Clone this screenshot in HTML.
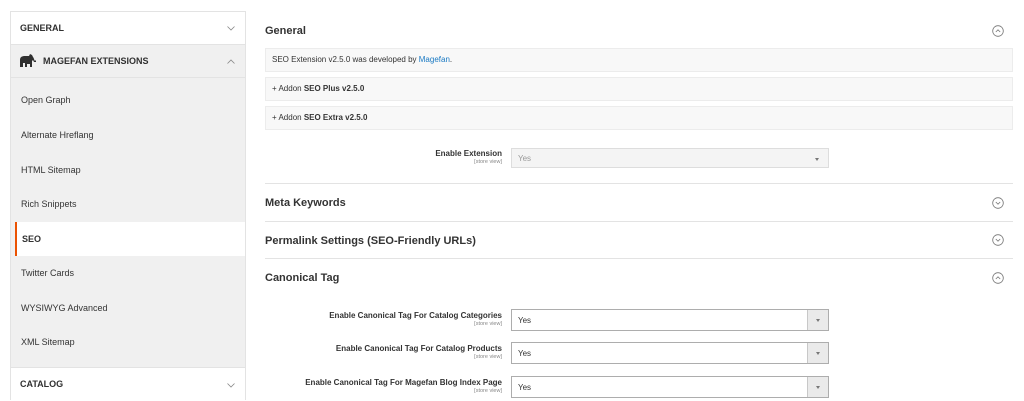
<!DOCTYPE html>
<html><head><meta charset="utf-8"><style>
*{margin:0;padding:0;box-sizing:border-box}
body{width:1024px;height:400px;background:#fff;font-family:"Liberation Sans",sans-serif;color:#303030;position:relative;overflow:hidden}
.a{position:absolute}
.side{left:10px;top:11px;width:236px;height:389px;border:1px solid #e3e3e3;background:#f0f0f0}
.hd{position:absolute;left:0;width:234px;height:33px;font-size:9px;font-weight:bold;color:#303030;padding-left:9px;line-height:33px}
.it{position:absolute;left:0;width:234px;height:34px;line-height:34px;font-size:9px;color:#333;padding-left:10px}
.chev{position:absolute;right:10px;top:0}
.sec{position:absolute;left:265px;font-size:11px;font-weight:bold;color:#333}
.line{position:absolute;left:265px;width:748px;height:1px;background:#e3e3e3}
.box{position:absolute;left:265px;width:748px;height:24px;background:#f8f8f8;border:1px solid #ececec;font-size:8px;line-height:22px;padding-left:6px;color:#333}
.lbl{position:absolute;right:calc(1024px - 502px);text-align:right;font-size:8px;font-weight:bold;color:#333;white-space:nowrap}
.lbl small{display:block;font-size:5.5px;font-weight:normal;color:#888;margin-top:1px}
.sel{position:absolute;left:511px;width:318px;height:22px;border:1px solid #adadad;background:#fff;font-size:8px;line-height:22px;padding-left:6px;color:#333}
.sel .btn{position:absolute;right:0;top:0;width:21px;height:20px;background:#eaeaea;border-left:1px solid #c8c8c8}
.sel .btn:after{content:"";position:absolute;left:8px;top:9px;border:2.5px solid transparent;border-top:3px solid #777}
.ci{position:absolute;left:992px}
</style></head><body>
<div class="a side">
 <div class="hd" style="top:0;background:#fff;border-bottom:1px solid #e3e3e3">GENERAL<svg class="chev" style="top:14px" width="8" height="5" viewBox="0 0 8 5"><path d="M.5 .5l3.5 3.5L7.5 .5" fill="none" stroke="#888" stroke-width=".8"/></svg></div>
 <div class="hd" style="top:33px;border-bottom:1px solid #e3e3e3;padding-left:32px">MAGEFAN EXTENSIONS
  <svg style="position:absolute;left:8px;top:9px" width="18" height="14" viewBox="0 0 18 14"><path d="M1 13V6C1 3 3 2 6 2H10L11 0 13 1 14 3C15 4 15 6 16 7L17 6 17 8 15 8 14 6 13 7V13H11V10H8V13H6V9H4V13Z" fill="#303030"/></svg>
  <svg class="chev" style="top:14px" width="8" height="5" viewBox="0 0 8 5"><path d="M.5 4.5L4 1l3.5 3.5" fill="none" stroke="#888" stroke-width=".8"/></svg></div>
 <div class="it" style="top:71px">Open Graph</div>
 <div class="it" style="top:106px">Alternate Hreflang</div>
 <div class="it" style="top:141px">HTML Sitemap</div>
 <div class="it" style="top:175px">Rich Snippets</div>
 <div class="it" style="top:210px;background:#fff;left:4px;width:230px;border-left:2px solid #eb5202;padding-left:5px;font-weight:bold">SEO</div>
 <div class="it" style="top:244px">Twitter Cards</div>
 <div class="it" style="top:279px">WYSIWYG Advanced</div>
 <div class="it" style="top:313px">XML Sitemap</div>
 <div class="hd" style="top:355px;background:#fff;border-top:1px solid #e3e3e3">CATALOG<svg class="chev" style="top:15px" width="8" height="5" viewBox="0 0 8 5"><path d="M.5 .5l3.5 3.5L7.5 .5" fill="none" stroke="#888" stroke-width=".8"/></svg></div>
</div>

<div class="sec" style="top:25px">General</div>
<div class="box" style="top:48px">SEO Extension v2.5.0 was developed by <span style="color:#1979c3">Magefan</span>.</div>
<div class="box" style="top:77px">+ Addon <b>SEO Plus v2.5.0</b></div>
<div class="box" style="top:106px">+ Addon <b>SEO Extra v2.5.0</b></div>
<div class="lbl" style="top:149px">Enable Extension<small>[store view]</small></div>
<div class="sel" style="top:148px;border-color:#ddd;background:#f4f4f4;color:#999;height:20px;line-height:20px">Yes<div class="btn" style="background:#f4f4f4;border-left:none;height:18px"></div></div>
<div class="line" style="top:183px"></div>
<div class="sec" style="top:197px">Meta Keywords</div>
<div class="line" style="top:221px"></div>
<div class="sec" style="top:235px">Permalink Settings (SEO-Friendly URLs)</div>
<div class="line" style="top:258px"></div>
<div class="sec" style="top:272px">Canonical Tag</div>

<div class="lbl" style="top:311px">Enable Canonical Tag For Catalog Categories<small>[store view]</small></div>
<div class="sel" style="top:309px">Yes<div class="btn"></div></div>
<div class="lbl" style="top:344px">Enable Canonical Tag For Catalog Products<small>[store view]</small></div>
<div class="sel" style="top:342px">Yes<div class="btn"></div></div>
<div class="lbl" style="top:378px">Enable Canonical Tag For Magefan Blog Index Page<small>[store view]</small></div>
<div class="sel" style="top:376px">Yes<div class="btn"></div></div>

<svg class="ci" style="top:25px" width="12" height="12" viewBox="0 0 12 12"><circle cx="6" cy="6" r="5.3" fill="none" stroke="#777" stroke-width=".8"/><path d="M3.8 7L6 4.8 8.2 7" fill="none" stroke="#777" stroke-width=".8"/></svg>
<svg class="ci" style="top:197px" width="12" height="12" viewBox="0 0 12 12"><circle cx="6" cy="6" r="5.3" fill="none" stroke="#777" stroke-width=".8"/><path d="M3.8 5L6 7.2 8.2 5" fill="none" stroke="#777" stroke-width=".8"/></svg>
<svg class="ci" style="top:234px" width="12" height="12" viewBox="0 0 12 12"><circle cx="6" cy="6" r="5.3" fill="none" stroke="#777" stroke-width=".8"/><path d="M3.8 5L6 7.2 8.2 5" fill="none" stroke="#777" stroke-width=".8"/></svg>
<svg class="ci" style="top:272px" width="12" height="12" viewBox="0 0 12 12"><circle cx="6" cy="6" r="5.3" fill="none" stroke="#777" stroke-width=".8"/><path d="M3.8 7L6 4.8 8.2 7" fill="none" stroke="#777" stroke-width=".8"/></svg>
</body></html>
